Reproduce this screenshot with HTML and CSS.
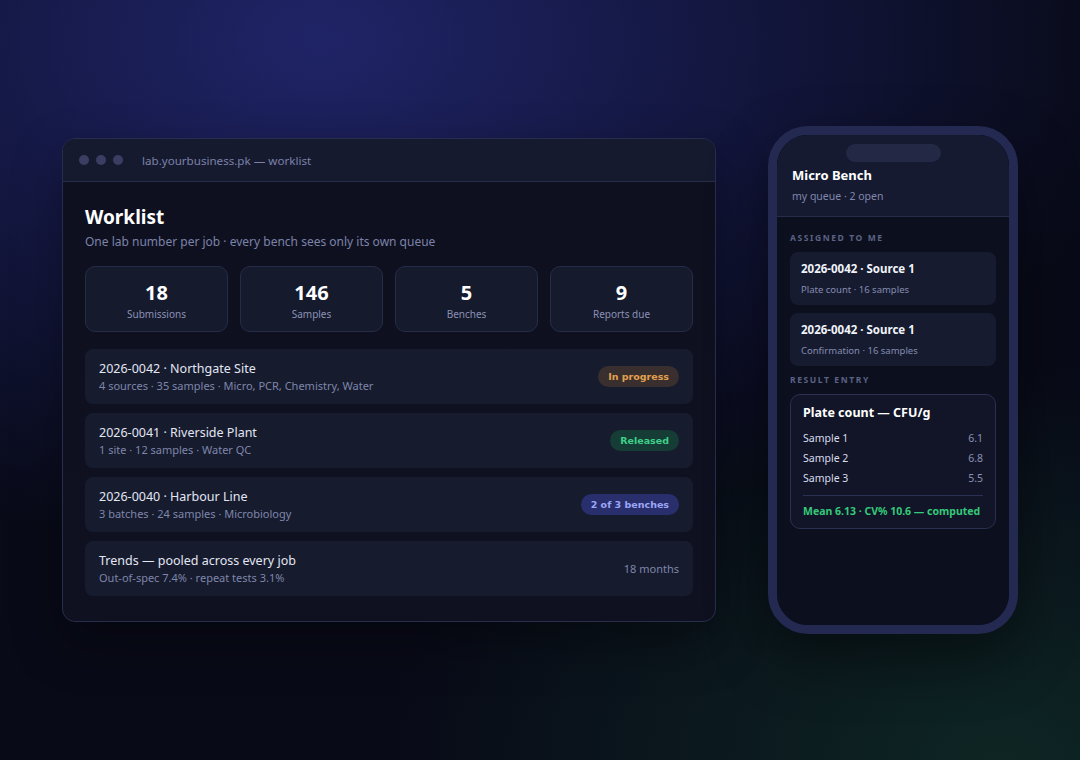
FILE: index.html
```html
<!DOCTYPE html>
<html lang="en">
<head>
    <meta charset="UTF-8">
    <meta name="viewport" content="width=device-width, initial-scale=1.0">
    <title>Worklist</title>
    <link rel="stylesheet" href="styles.css">
</head>
<body>

    <div class="stage">

        <!-- desktop window -->
        <div class="window">
            <div class="titlebar">
                <span class="dot"></span>
                <span class="dot"></span>
                <span class="dot"></span>
                <span class="url">lab.yourbusiness.pk — worklist</span>
            </div>

            <div class="window-body">
                <h1>Worklist</h1>
                <p class="lead">One lab number per job · every bench sees only its own queue</p>

                <div class="stats">
                    <div class="stat"><b>18</b><span>Submissions</span></div>
                    <div class="stat"><b>146</b><span>Samples</span></div>
                    <div class="stat"><b>5</b><span>Benches</span></div>
                    <div class="stat"><b>9</b><span>Reports due</span></div>
                </div>

                <div class="jobs">
                    <div class="job">
                        <div>
                            <div class="job-title">2026-0042 · Northgate Site</div>
                            <div class="job-sub">4 sources · 35 samples · Micro, PCR, Chemistry, Water</div>
                        </div>
                        <span class="badge badge-progress">In progress</span>
                    </div>
                    <div class="job">
                        <div>
                            <div class="job-title">2026-0041 · Riverside Plant</div>
                            <div class="job-sub">1 site · 12 samples · Water QC</div>
                        </div>
                        <span class="badge badge-released">Released</span>
                    </div>
                    <div class="job">
                        <div>
                            <div class="job-title">2026-0040 · Harbour Line</div>
                            <div class="job-sub">3 batches · 24 samples · Microbiology</div>
                        </div>
                        <span class="badge badge-benches">2 of 3 benches</span>
                    </div>
                    <div class="job">
                        <div>
                            <div class="job-title">Trends — pooled across every job</div>
                            <div class="job-sub">Out-of-spec 7.4% · repeat tests 3.1%</div>
                        </div>
                        <span class="job-meta">18 months</span>
                    </div>
                </div>
            </div>
        </div>

        <!-- phone -->
        <div class="phone">
            <div class="screen">
                <div class="phone-head">
                    <div class="notch"></div>
                    <div class="phone-title">Micro Bench</div>
                    <div class="phone-sub">my queue · 2 open</div>
                </div>

                <div class="phone-body">
                    <div class="section-label">Assigned to me</div>
                    <div class="task">
                        <div class="task-title">2026-0042 · Source 1</div>
                        <div class="task-sub">Plate count · 16 samples</div>
                    </div>
                    <div class="task">
                        <div class="task-title">2026-0042 · Source 1</div>
                        <div class="task-sub">Confirmation · 16 samples</div>
                    </div>

                    <div class="section-label">Result entry</div>
                    <div class="result">
                        <div class="result-title">Plate count — CFU/g</div>
                        <div class="result-row"><span>Sample 1</span><span class="val">6.1</span></div>
                        <div class="result-row"><span>Sample 2</span><span class="val">6.8</span></div>
                        <div class="result-row"><span>Sample 3</span><span class="val">5.5</span></div>
                        <div class="result-foot">Mean 6.13 · CV% 10.6 — computed</div>
                    </div>
                </div>
            </div>
        </div>

    </div>

</body>
</html>
```

FILE: styles.css
```css
* {
    box-sizing: border-box;
}
html, body {
    margin: 0;
    height: 100%;
}
body {
    font-family: "Noto Sans", "Open Sans", sans-serif;
    color: #e4e7f4;
    background:
        radial-gradient(ellipse 820px 520px at 320px 40px, rgba(32, 37, 106, 0.97) 0%, rgba(29, 33, 96, 0.6) 45%, rgba(14, 16, 40, 0) 100%),
        radial-gradient(ellipse 620px 400px at 1000px 760px, rgba(15, 42, 38, 0.85) 0%, rgba(12, 30, 30, 0) 100%),
        #080a17;
    overflow: hidden;
}
.stage {
    width: 1080px;
    height: 760px;
    display: flex;
    align-items: center;
    justify-content: center;
    gap: 52px;
}

/* window */
.window {
    width: 654px;
    border: 1px solid #272d4c;
    border-radius: 13px;
    background: linear-gradient(180deg, #0e1020 0%, #0f1120 100%);
    overflow: hidden;
    box-shadow: 0 20px 50px rgba(0, 0, 0, 0.35);
}
.titlebar {
    height: 43px;
    display: flex;
    align-items: center;
    gap: 7px;
    padding-left: 16px;
    background: #161a2f;
    border-bottom: 1px solid #272d4a;
}
.dot {
    width: 10px;
    height: 10px;
    border-radius: 50%;
    background: #3a3e63;
}
.url {
    margin-left: 12px;
    font-size: 11.6px;
    color: #7b81a8;
}
.window-body {
    padding: 23px 22px 25px;
}
h1 {
    margin: 0;
    font-size: 19px;
    line-height: 24px;
    font-weight: 700;
    color: #ffffff;
}
.lead {
    margin: 5px 0 0;
    font-size: 12px;
    line-height: 16px;
    color: #7c83a8;
}
.stats {
    margin-top: 16px;
    display: grid;
    grid-template-columns: repeat(4, 1fr);
    gap: 12px;
}
.stat {
    height: 66px;
    border: 1px solid #262c47;
    border-radius: 10px;
    background: #151a2d;
    display: flex;
    flex-direction: column;
    align-items: center;
    padding-top: 14px;
}
.stat b {
    font-size: 20px;
    line-height: 24px;
    color: #ffffff;
}
.stat span {
    margin-top: 2px;
    font-size: 10px;
    line-height: 14px;
    color: #8b91b4;
}
.jobs {
    margin-top: 17px;
    display: flex;
    flex-direction: column;
    gap: 9px;
}
.job {
    height: 55px;
    border-radius: 8px;
    background: #161b2e;
    padding: 11px 14px;
    display: flex;
    align-items: center;
    justify-content: space-between;
}
.job-title {
    font-size: 12.5px;
    line-height: 18px;
    color: #e3e6f3;
}
.job-sub {
    font-size: 11px;
    line-height: 16px;
    color: #7f86aa;
}
.job-meta {
    font-size: 11px;
    color: #7f86aa;
}
.badge {
    height: 21px;
    padding: 0 10px;
    border-radius: 11px;
    font-family: "DejaVu Sans", sans-serif;
    font-size: 9.5px;
    font-weight: 700;
    display: flex;
    align-items: center;
}
.badge-progress {
    background: #392f2e;
    color: #e2a04f;
}
.badge-released {
    background: #163d35;
    color: #3fd08a;
}
.badge-benches {
    background: #292f6c;
    color: #9ca6f6;
}

/* phone */
.phone {
    width: 250px;
    height: 508px;
    border: 9px solid #232950;
    border-radius: 40px;
    background: #0c0f1e;
    overflow: hidden;
    box-shadow: 0 24px 60px rgba(0, 0, 0, 0.45);
}
.screen {
    height: 100%;
    border-radius: 31px;
    overflow: hidden;
    background: #0c0f1e;
}
.phone-head {
    background: #151a30;
    border-bottom: 1px solid #272d49;
    padding: 9px 15px 13px;
}
.notch {
    width: 95px;
    height: 18px;
    margin: 0 auto;
    border-radius: 9px;
    background: #232844;
}
.phone-title {
    margin-top: 4px;
    font-size: 13px;
    line-height: 18px;
    font-weight: 700;
    color: #ffffff;
}
.phone-sub {
    margin-top: 5px;
    font-size: 10.5px;
    line-height: 14px;
    color: #8087ab;
}
.phone-body {
    padding: 15px 13px;
}
.section-label {
    font-size: 8.5px;
    line-height: 12px;
    font-weight: 700;
    letter-spacing: 1.6px;
    text-transform: uppercase;
    color: #5b6284;
    margin-bottom: 8px;
}
.task {
    height: 53px;
    border-radius: 8px;
    background: #161b2f;
    padding: 9px 11px;
    margin-bottom: 8px;
}
.task-title {
    font-size: 11.5px;
    line-height: 16px;
    font-weight: 700;
    color: #f1f3fa;
}
.task-sub {
    margin-top: 6px;
    font-size: 9.5px;
    line-height: 14px;
    color: #858cb0;
}
.result {
    border: 1px solid #2a3050;
    border-radius: 10px;
    background: #111527;
    padding: 10px 12px;
}
.result-title {
    font-size: 12.5px;
    line-height: 16px;
    font-weight: 700;
    color: #ffffff;
    margin-bottom: 7px;
}
.result-row {
    display: flex;
    justify-content: space-between;
    font-size: 10.5px;
    line-height: 20px;
    color: #d9dcee;
}
.result-row .val {
    color: #8a91b4;
}
.result-foot {
    margin-top: 7px;
    padding-top: 8px;
    border-top: 1px solid #2b3152;
    font-size: 10.5px;
    line-height: 14px;
    font-weight: 700;
    color: #35c97a;
}
```
